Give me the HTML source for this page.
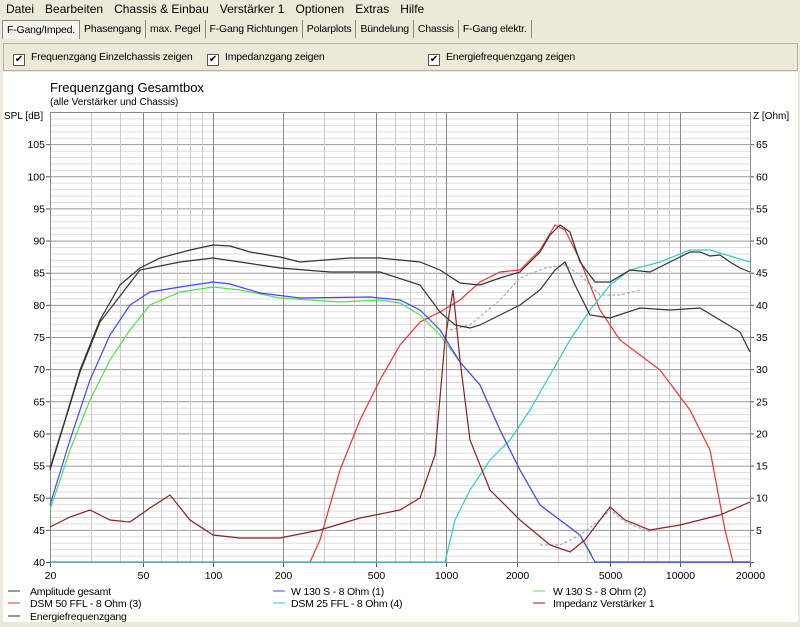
<!DOCTYPE html>
<html><head><meta charset="utf-8"><style>
body{margin:0;width:800px;height:627px;background:#ece9d8;font-family:"Liberation Sans",sans-serif;font-size:11px;color:#000;position:relative;overflow:hidden}
.menu{position:absolute;top:2px;left:6px;font-size:12px;word-spacing:0}
.menu span{margin-right:11px}
.tabs{position:absolute;top:20px;left:2px;height:19px;display:flex;font-size:10.5px;letter-spacing:-0.2px}
.tab{padding:2px 4px;border-right:1px solid #888;height:14px;line-height:14px}
.tab.sel{border:1px solid #888;border-bottom:none;background:#f4f3ee}
.panel{position:absolute;top:43px;left:3px;width:793px;height:26px;border:1px solid #b5b2a5;background:#ece9d8}
.cb{position:absolute;top:7px;font-size:10.5px;letter-spacing:-0.2px}
.cb i{display:inline-block;width:10px;height:10px;border:1px solid #555;background:#fff;vertical-align:-2px;margin-right:6px;font-style:normal;font-size:10px;line-height:10px;text-align:center}
.white{position:absolute;top:72px;left:3px;width:795px;height:550px;background:#fff}
svg{position:absolute;left:0;top:0}
</style></head><body>
<div class="menu"><span>Datei</span><span>Bearbeiten</span><span>Chassis &amp; Einbau</span><span>Verstärker 1</span><span>Optionen</span><span>Extras</span><span>Hilfe</span></div>
<div class="tabs"><div class="tab sel">F-Gang/Imped.</div><div class="tab">Phasengang</div><div class="tab">max. Pegel</div><div class="tab">F-Gang Richtungen</div><div class="tab">Polarplots</div><div class="tab">Bündelung</div><div class="tab">Chassis</div><div class="tab">F-Gang elektr.</div></div>
<div class="panel">
<div class="cb" style="left:9px"><i>✔</i>Frequenzgang Einzelchassis zeigen</div>
<div class="cb" style="left:203px"><i>✔</i>Impedanzgang zeigen</div>
<div class="cb" style="left:424px"><i>✔</i>Energiefrequenzgang zeigen</div>
</div>
<div class="white"></div>
<svg width="800" height="627" font-family="Liberation Sans, sans-serif" font-size="10.5">
<text x="50" y="92" font-size="13">Frequenzgang Gesamtbox</text>
<text x="50" y="105" font-size="10">(alle Verstärker und Chassis)</text>
<text x="4" y="119" font-size="10">SPL [dB]</text>
<text x="753" y="119" font-size="10">Z [Ohm]</text>
<g id="grid"></g>
<rect x="50.5" y="112.5" width="700" height="450" fill="none" stroke="#888"/>
<g id="curves" fill="none" stroke-width="1.2"></g>
<g font-size="10.5" letter-spacing="-0.2">
<line x1="8" y1="591" x2="20" y2="591" stroke="#333"/><text x="30" y="595">Amplitude gesamt</text>
<line x1="8" y1="603" x2="20" y2="603" stroke="#e33"/><text x="30" y="607">DSM 50 FFL - 8 Ohm (3)</text>
<line x1="8" y1="616" x2="20" y2="616" stroke="#333"/><text x="30" y="620">Energiefrequenzgang</text>
<line x1="273" y1="591" x2="285" y2="591" stroke="#44f"/><text x="291" y="595">W 130 S - 8 Ohm (1)</text>
<line x1="273" y1="603" x2="285" y2="603" stroke="#3cc"/><text x="291" y="607">DSM 25 FFL - 8 Ohm (4)</text>
<line x1="533" y1="591" x2="545" y2="591" stroke="#5d5"/><text x="553" y="595">W 130 S - 8 Ohm (2)</text>
<line x1="533" y1="603" x2="545" y2="603" stroke="#822"/><text x="553" y="607">Impedanz Verstärker 1</text>
</g>
</svg>
<script>
var NS="http://www.w3.org/2000/svg",g=document.getElementById('grid'),c=document.getElementById('curves');
function el(p,t,a,txt){var e=document.createElementNS(NS,t);for(var k in a)e.setAttribute(k,a[k]);if(txt)e.textContent=txt;p.appendChild(e);}
function X(f){return 50+700*Math.log10(f/20)/3;}
for(var d=40;d<=110;d++){var y=562-(d-40)*450/70;var m=d%5==0;
 el(g,'line',{x1:50,x2:750,y1:y+.5,y2:y+.5,stroke:m?'#999':'#ddd'});
 if(m&&d<110){el(g,'line',{x1:46,x2:50,y1:y+.5,y2:y+.5,stroke:'#555'});el(g,'line',{x1:750,x2:754,y1:y+.5,y2:y+.5,stroke:'#555'});
 el(g,'text',{x:45,y:y+4,'text-anchor':'end'},d);var z=d-40;if(z>0)el(g,'text',{x:756,y:y+4},z);}}
[20,30,40,50,60,70,80,90,100,200,300,400,500,600,700,800,900,1000,2000,3000,4000,5000,6000,7000,8000,9000,10000,20000].forEach(function(f){
 var x=Math.round(X(f))+.5;var s=String(f);var maj=/^[125]0*$/.test(s);
 el(g,'line',{x1:x,x2:x,y1:112,y2:562,stroke:maj?'#888':'#ccc'});
 if(maj){el(g,'line',{x1:x,x2:x,y1:562,y2:567,stroke:'#555'});el(g,'text',{x:x,y:579,'text-anchor':'middle'},s);}});
function P(col,pts,dash){el(c,'polyline',{points:pts,stroke:col,'stroke-dasharray':dash||''});}
P('#e33','50,562 310,562 320,540 340,470 360,420 380,380 400,345 420,322 440,312 460,300 480,282 500,272 520,270 540,250 555,225 565,230 580,260 600,310 620,340 660,370 690,410 710,450 725,530 733,562 750,562');
P('#3cc','50,562 445,562 455,520 470,490 490,460 510,440 530,410 550,375 570,340 590,310 610,285 630,270 660,262 690,250 710,250 730,256 750,262');
P('#5d5','50,510 70,450 90,400 110,360 130,330 150,305 180,292 213,287 240,290 280,298 340,302 380,300 400,303 420,315 440,335 460,362 480,385 500,430 520,470 540,505 560,520 580,535 592,555');
P('#44f','50,505 70,440 90,380 110,335 130,305 150,292 180,287 213,282 230,284 260,293 300,298 370,297 400,300 420,310 440,330 460,362 480,385 500,430 520,470 540,505 560,520 580,535 595,562 750,562');
P('#aaa','450,330 470,325 500,300 520,278 545,268 565,265 580,275 600,295 620,295 640,290','3,2');
P('#aaa','540,545 560,545 580,535 600,520 610,510 625,522 650,532','3,2');
P('#333','50,470 80,372 100,322 140,270 180,262 213,258 240,262 280,268 330,272 380,272 420,285 440,312 455,325 470,328 480,325 500,315 520,305 540,290 555,270 565,262 575,285 590,315 610,318 640,308 670,310 700,308 720,320 740,332 750,352');
P('#333','50,468 65,420 80,370 100,320 120,285 140,268 160,258 190,250 213,245 230,246 250,252 280,257 300,262 350,258 380,258 420,262 440,270 460,283 480,285 500,278 520,272 540,252 550,235 560,225 570,232 580,262 595,282 610,282 630,270 650,272 670,262 690,252 700,252 710,256 720,255 730,262 740,268 750,272');
P('#822','50,527 70,517 90,510 110,520 130,522 150,508 170,495 190,520 213,535 240,538 280,538 320,530 360,518 400,510 420,498 435,455 445,340 453,290 460,360 470,440 490,490 520,520 550,545 570,552 585,540 600,520 610,507 625,520 650,530 680,525 720,515 750,502');
</script>
</body></html>
